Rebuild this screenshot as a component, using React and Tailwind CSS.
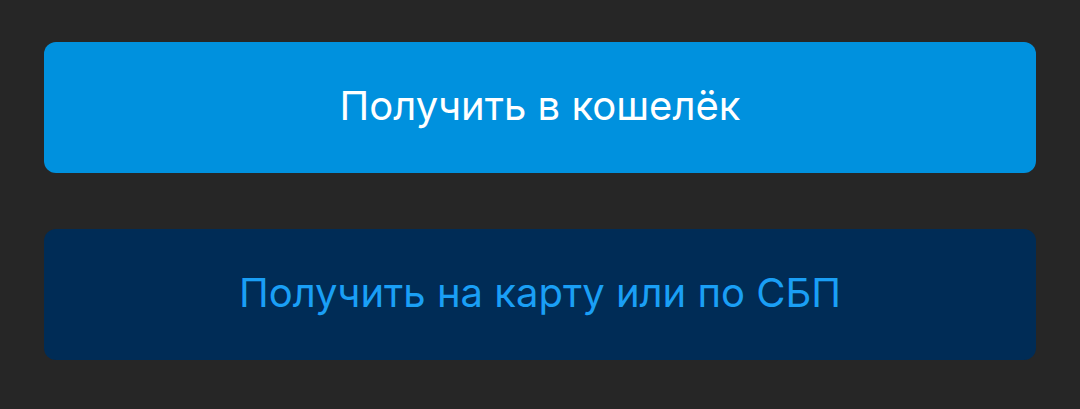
import React from 'react';

const App = () => {
    return (
        <div className="w-[1080px] h-[409px] bg-[#262626] px-[44px] pt-[42px] flex flex-col gap-[56px]" style={{ fontFamily: 'Inter, "Noto Sans", sans-serif' }}>
            <button className="h-[131px] w-full rounded-[12px] bg-[#0091de] text-white text-[40px] pb-[4px] flex items-center justify-center">
                Получить в кошелёк
            </button>
            <button className="h-[131px] w-full rounded-[12px] bg-[#002c56] text-[#1a9ff5] text-[40px] pb-[4px] flex items-center justify-center">
                Получить на карту или по СБП
            </button>
        </div>
    );
};

export default App;
